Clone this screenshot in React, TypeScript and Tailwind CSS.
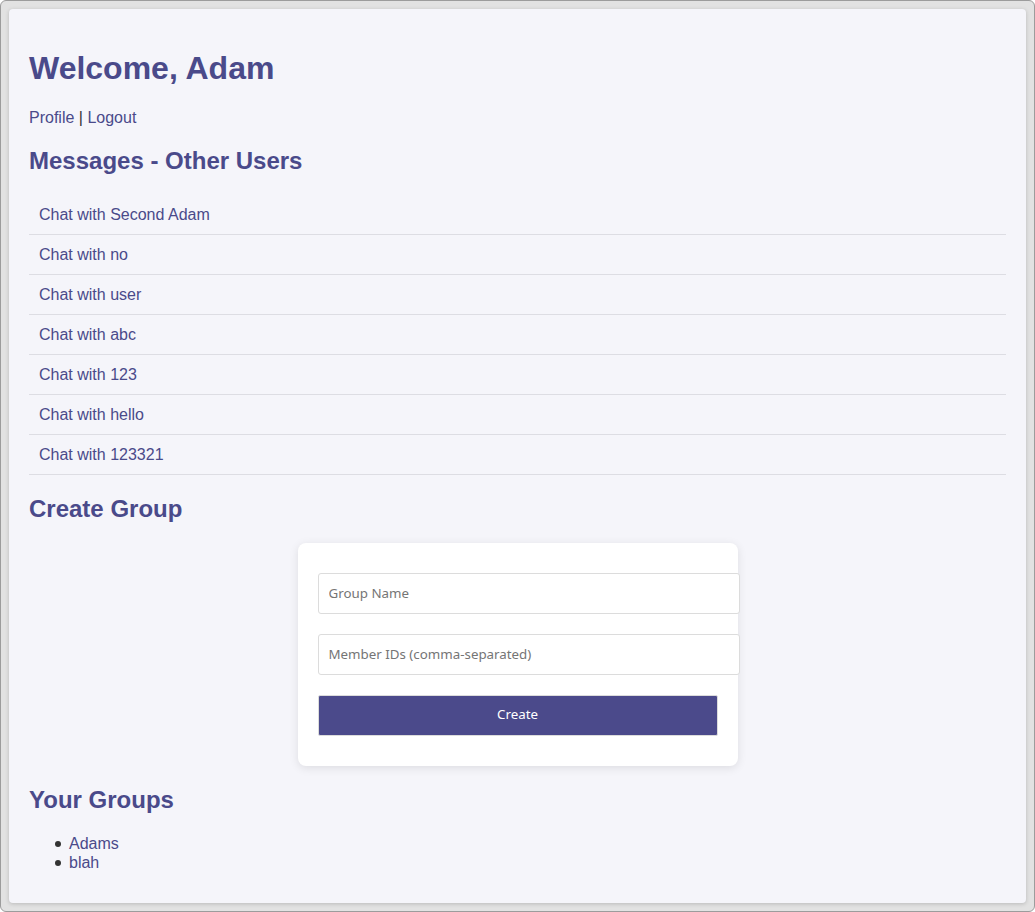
import React from "react";

const users = ["Second Adam", "no", "user", "abc", "123", "hello", "123321"];

export default function App() {
  return (
    <div
      className="w-[1035px] h-[912px] bg-[#e2e2e2] border border-[#9c9c9c] rounded-[6px] p-[8px] overflow-hidden"
      style={{ fontFamily: '"Liberation Sans", Arial, sans-serif' }}
    >
      <div className="h-full bg-[#f5f5fa] rounded-[4px] shadow-[0_1px_4px_rgba(0,0,0,0.18)] px-[20px] pt-[20px] flow-root text-[16px] text-[#333]">
        <h1 className="text-[32px] font-bold leading-[36.8px] my-[21.44px] text-[#4a4a8a]">Welcome, Adam</h1>
        <p className="my-[16px] leading-[18.4px]">
          <a className="text-[#4a4a8a]">Profile</a> | <a className="text-[#4a4a8a]">Logout</a>
        </p>
        <h2 className="text-[24px] font-bold leading-[27.6px] my-[19.92px] text-[#4a4a8a]">Messages - Other Users</h2>
        <ul className="mt-[20.3px] mb-[16px]">
          {users.map((u) => (
            <li key={u} className="px-[10px] py-[10px] leading-[19px] border-b border-[#dddde3]">
              <a className="text-[#4a4a8a]">Chat with {u}</a>
            </li>
          ))}
        </ul>
        <h2 className="text-[24px] font-bold leading-[27.6px] mt-[20.6px] mb-[19.92px] text-[#4a4a8a]">Create Group</h2>
        <div className="w-[440px] h-[223px] mx-auto bg-white rounded-[8px] shadow-[0_2px_10px_rgba(0,0,0,0.1)] px-[20px] pt-[30px]">
          <div style={{ fontFamily: '"Noto Sans", "Open Sans", sans-serif' }}>
            <input
              placeholder="Group Name"
              className="block w-[422px] h-[41px] px-[10px] mb-[20px] border border-[#dcdcdc] rounded-[3px] bg-white text-[13.33px] placeholder:text-[#757575] outline-none"
            />
            <input
              placeholder="Member IDs (comma-separated)"
              className="block w-[422px] h-[41px] px-[10px] mb-[20px] border border-[#dcdcdc] rounded-[3px] bg-white text-[13.33px] placeholder:text-[#757575] outline-none"
            />
            <button className="block w-[400px] h-[41px] bg-[#4b4a8b] text-white text-[13.33px] border border-[#dcdcdc] rounded-[2px]">
              Create
            </button>
          </div>
        </div>
        <h2 className="text-[24px] font-bold leading-[27.6px] my-[19.92px] text-[#4a4a8a]">Your Groups</h2>
        <ul className="mt-[21px] mb-[16px] pl-[40px] list-none">
          {["Adams", "blah"].map((g) => (
            <li key={g} className="flex items-center h-[19px]">
              <span className="ml-[-14px] mr-[8px] w-[6px] h-[6px] rounded-full bg-[#333] shrink-0" />
              <a className="text-[#4a4a8a] text-[16px] leading-[19px]">{g}</a>
            </li>
          ))}
        </ul>
      </div>
    </div>
  );
}
